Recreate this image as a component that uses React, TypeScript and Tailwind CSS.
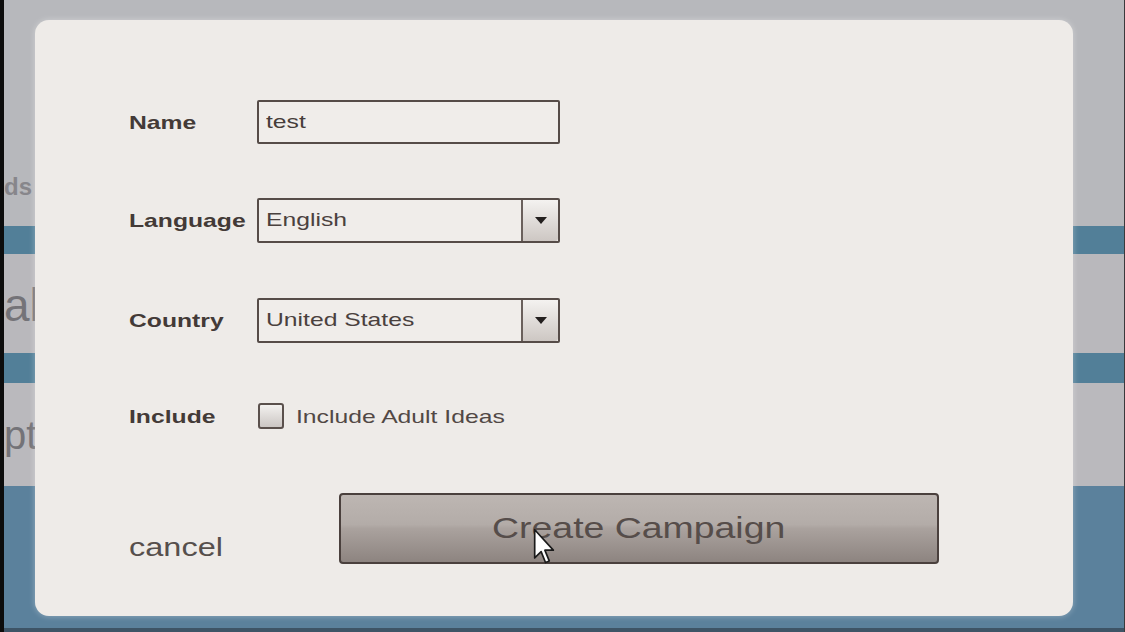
const font = { fontFamily: '"Liberation Sans", Arial, sans-serif' }

function Wide({ children, className = '' }: { children: React.ReactNode; className?: string }) {
  return <span className={`inline-block origin-left scale-x-[1.3] whitespace-nowrap ${className}`}>{children}</span>
}

function Label({ text }: { text: string }) {
  return (
    <div className="w-[128px] shrink-0 text-[19px] font-bold leading-none text-[#433a37]">
      <Wide>{text}</Wide>
    </div>
  )
}

function Select({ value }: { value: string }) {
  return (
    <div className="flex h-[45px] w-[303px] rounded-[2px] border-2 border-[#564c48] bg-[#f0edea]">
      <div className="flex flex-1 items-center pl-[7px] text-[19px] text-[#4a413e]">
        <Wide>{value}</Wide>
      </div>
      <div className="flex w-[37px] items-center justify-center rounded-r-[3px] border-l-2 border-[#6a605c] bg-linear-to-b from-[#f4f2f0] to-[#cdc7c3]">
        <svg width="12" height="7" viewBox="0 0 12 7">
          <path d="M0 0 H12 L6 7 Z" fill="#231f1e" />
        </svg>
      </div>
    </div>
  )
}

function Backdrop() {
  return (
    <div className="flex flex-1 flex-col">
      <div className="flex h-[226px] bg-[#b7b8bc]">
        <div className="w-[31px] pt-[175px] text-[24px] font-bold leading-[24px] text-[#87868b]">
          <span className="whitespace-nowrap">ds</span>
        </div>
      </div>
      <div className="h-[28px] bg-[#527f98]" />
      <div className="flex h-[99px] bg-[#b9b8bc]">
        <div className="w-[31px] pt-[27px] text-[46px] leading-[48px] text-[#747378]">
          <span className="whitespace-nowrap">al</span>
        </div>
      </div>
      <div className="h-[30px] bg-[#527f98]" />
      <div className="flex h-[103px] bg-[#bab9bd]">
        <div className="w-[31px] pt-[30px] text-[40px] leading-[44px] text-[#747378]">
          <span className="whitespace-nowrap">pt</span>
        </div>
      </div>
      <div className="flex-1 bg-[#5b819c]" />
      <div className="h-[4px] bg-[#3e5466]" />
    </div>
  )
}

export default function App() {
  return (
    <div className="relative flex h-[632px] w-[1125px] overflow-hidden bg-[#b8b8bc]" style={font}>
      <div className="w-[4px] bg-[#0c0c0c]" />
      <Backdrop />
      <div className="w-px bg-[#3a3a3c]" />

      {/* dialog */}
      <div className="absolute top-[20px] left-[35px] flex h-[596px] w-[1038px] flex-col rounded-[14px] bg-[#eeebe8] pt-[80px] pl-[94px] shadow-[0_0_6px_rgba(255,255,255,0.35)]">
        <div className="flex items-center">
          <Label text="Name" />
          <div className="flex h-[44px] w-[303px] items-center rounded-[2px] border-2 border-[#564c48] bg-[#f0edea] pl-[7px] text-[19px] text-[#463d3a]">
            <Wide>test</Wide>
          </div>
        </div>

        <div className="mt-[54px] flex items-center">
          <Label text="Language" />
          <Select value="English" />
        </div>

        <div className="mt-[55px] flex items-center">
          <Label text="Country" />
          <Select value="United States" />
        </div>

        <div className="mt-[60px] flex items-center">
          <Label text="Include" />
          <div className="ml-px h-[26px] w-[26px] rounded-[3px] border-2 border-[#5a504c] bg-linear-to-b from-[#f3f1ef] to-[#cbc6c3]" />
          <div className="ml-[12px] text-[19px] leading-none text-[#514845]">
            <Wide>Include Adult Ideas</Wide>
          </div>
        </div>

        <div className="mt-[64px] flex items-end">
          <div className="mb-[4px] w-[210px] text-[25px] leading-[25px] text-[#564f4c]">
            <Wide>cancel</Wide>
          </div>
          <button className="flex h-[71px] w-[600px] items-center justify-center rounded-[4px] border-2 border-[#4a403d] bg-[linear-gradient(to_bottom,#bdb6b2_0%,#b3aca8_44%,#aaa29e_50%,#8d8480_100%)] text-[29px] text-[#564d4a]">
            <span className="inline-block origin-center scale-x-[1.29] whitespace-nowrap">Create Campaign</span>
          </button>
        </div>
      </div>

      {/* mouse pointer */}
      <svg className="absolute top-[528px] left-[533px]" width="22" height="37" viewBox="0 0 13 21" preserveAspectRatio="none">
        <path d="M1 1 L1 17 L4.8 13.4 L7.4 19.6 L9.6 18.7 L7 12.6 L12 12.6 Z" fill="#ffffff" stroke="#1a1a1a" strokeWidth="1" strokeLinejoin="round" />
      </svg>
    </div>
  )
}
